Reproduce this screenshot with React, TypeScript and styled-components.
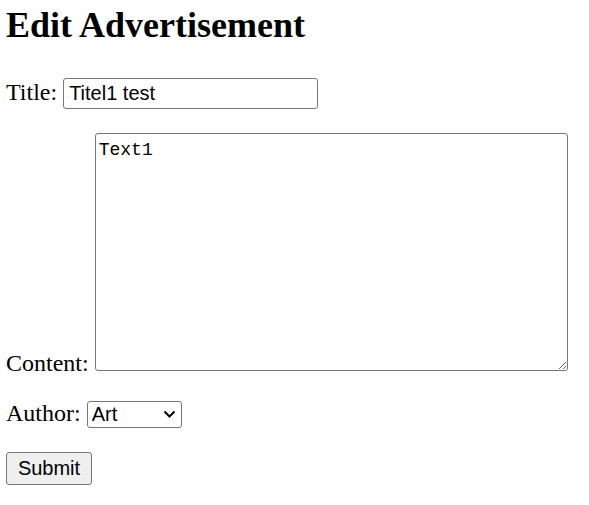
import React from "react";
import styled, { createGlobalStyle } from "styled-components";

const Global = createGlobalStyle`
  html, body { margin: 0; padding: 0; background: #fff; }
  body { font-family: "Liberation Serif", "Times New Roman", serif; color: #000; }
`;

const Page = styled.form`
  padding: 4px 6px 0 6px;
  font-size: 24px;
`;

const Heading = styled.h1`
  margin: 0;
  font-size: 36px;
  font-weight: bold;
  line-height: normal;
`;

const Row = styled.div<{ $top: number }>`
  margin-top: ${(p) => p.$top}px;
  line-height: normal;
`;

const TextInput = styled.input`
  font-family: "Liberation Sans", Arial, sans-serif;
  font-size: 20px;
  width: 255px;
  height: 31px;
  box-sizing: border-box;
  border: 1px solid #767676;
  border-radius: 3px;
  padding: 1px 5px;
  color: #000;
  background: #fff;
  vertical-align: baseline;
`;

const Area = styled.textarea`
  font-family: "Liberation Mono", "DejaVu Sans Mono", monospace;
  font-size: 18px;
  width: 473px;
  height: 238px;
  box-sizing: border-box;
  border: 1px solid #767676;
  border-radius: 3px;
  padding: 6px 3px 4px;
  color: #000;
  background: #fff;
  margin: 0;
`;

const SelectWrap = styled.span`
  position: relative;
  display: inline-block;
`;

const Select = styled.select`
  appearance: none;
  font-family: "Liberation Sans", Arial, sans-serif;
  font-size: 20px;
  width: 95px;
  height: 27px;
  box-sizing: border-box;
  border: 1px solid #767676;
  border-radius: 3px;
  padding: 0 4px;
  color: #000;
  background: #fff;
`;

const Chevron = styled.svg`
  position: absolute;
  right: 6px;
  top: 50%;
  margin-top: -4px;
  width: 13px;
  height: 8px;
  pointer-events: none;
`;

const Button = styled.button`
  font-family: "Liberation Sans", Arial, sans-serif;
  font-size: 20px;
  width: 86px;
  height: 33px;
  box-sizing: border-box;
  border: 1px solid #767676;
  border-radius: 3px;
  background: #efefef;
  color: #000;
  padding: 0;
`;

export default function App() {
  return (
    <>
      <Global />
      <Page onSubmit={(e) => e.preventDefault()}>
        <Heading>Edit Advertisement</Heading>
        <Row $top={32}>
          Title: <TextInput defaultValue="Titel1 test" />
        </Row>
        <Row $top={24}>
          Content: <Area defaultValue="Text1" />
        </Row>
        <Row $top={23}>
          Author:{" "}
          <SelectWrap>
            <Select defaultValue="Art">
              <option>Art</option>
            </Select>
            <Chevron viewBox="0 0 13 8">
              <path d="M1.5 1.5 L6.5 6.5 L11.5 1.5" fill="none" stroke="#000" strokeWidth="2" />
            </Chevron>
          </SelectWrap>
        </Row>
        <Row $top={24}>
          <Button type="submit">Submit</Button>
        </Row>
      </Page>
    </>
  );
}
